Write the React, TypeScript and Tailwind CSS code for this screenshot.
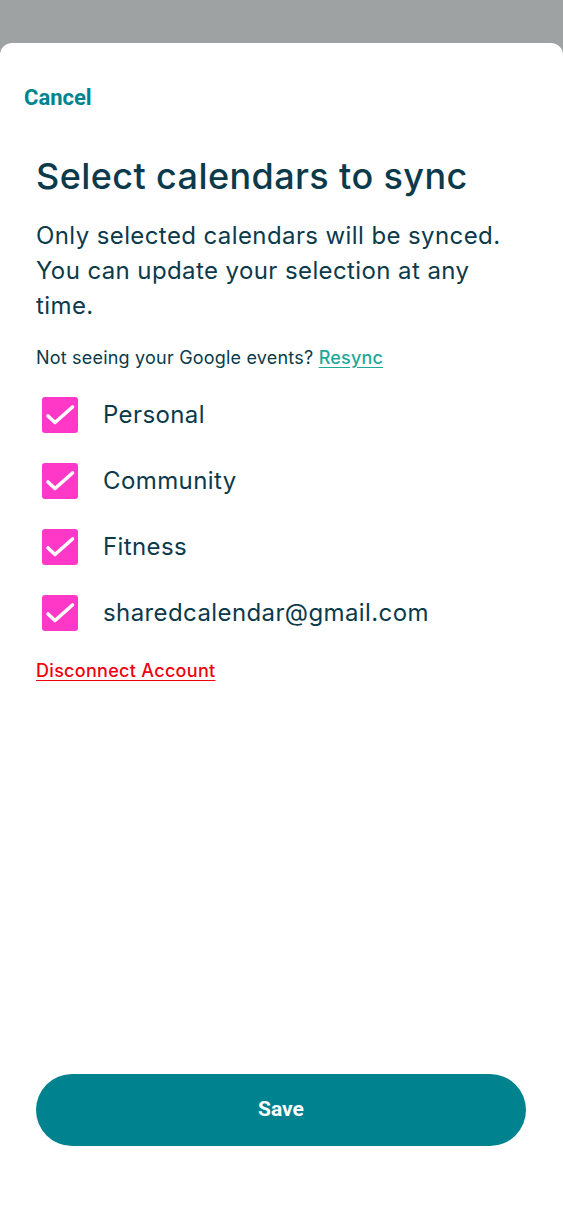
import React from 'react';

const calendars = ['Personal', 'Community', 'Fitness', 'sharedcalendar@gmail.com'];

function CheckBox() {
  return (
    <div className="w-[36px] h-[36px] rounded-[3px] bg-[#ff38c8] shrink-0">
      <svg width="36" height="36" viewBox="0 0 36 36" fill="none">
        <path d="M6 19l7 6.5L30.5 10" stroke="white" strokeWidth="3.6" strokeLinecap="round" strokeLinejoin="round" />
      </svg>
    </div>
  );
}

export default function App() {
  return (
    <div className="w-[563px] h-[1218px] bg-[#9fa2a3] flex flex-col overflow-hidden">
      <div className="mt-[43px] flex-1 bg-white rounded-t-[12px] flex flex-col font-['Inter',sans-serif] text-[#0b3a4b]">
        {/* Header */}
        <div className="px-6 pt-[43px]">
          <button className="font-['Roboto',sans-serif] font-bold text-[22px] leading-6 text-[#00838f]">Cancel</button>
        </div>

        <div className="px-9 pt-[43px]">
          <h1 className="text-[36px] leading-[44px] font-medium tracking-[0.4px]">Select calendars to sync</h1>
          <p className="mt-[20px] text-[24px] leading-[35px] tracking-[0.4px]">
            Only selected calendars will be synced. You can update your selection at any time.
          </p>
          <p className="mt-[23px] text-[18px] leading-[24px] tracking-[0.2px]">
            Not seeing your Google events?{' '}
            <span className="text-[#1fa89a] font-medium underline underline-offset-[3px]">Resync</span>
          </p>

          <div className="mt-[27px] flex flex-col gap-[30px] pl-[6px]">
            {calendars.map((c) => (
              <div key={c} className="flex items-center gap-[25px]">
                <CheckBox />
                <span className="text-[24px] leading-[36px] tracking-[0.4px]">{c}</span>
              </div>
            ))}
          </div>

          <div className="mt-[28px]">
            <span className="text-[18px] leading-[24px] tracking-[0.3px] text-[#f0000f] font-medium underline underline-offset-[3px]">
              Disconnect Account
            </span>
          </div>
        </div>

        <div className="flex-1" />

        <div className="px-9 pb-[72px]">
          <button className="w-[490px] h-[72px] rounded-full bg-[#00838f] text-white font-['Roboto',sans-serif] font-bold text-[21px]">
            Save
          </button>
        </div>
      </div>
    </div>
  );
}
